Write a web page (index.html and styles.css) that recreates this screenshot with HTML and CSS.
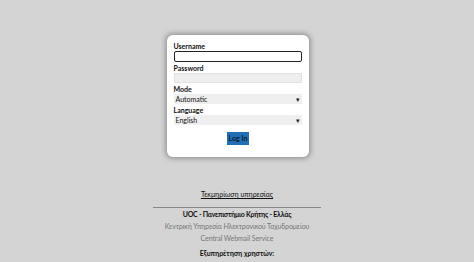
FILE: index.html
```html
<!DOCTYPE html>
<html>
<head>
<meta charset="utf-8">
<link rel="stylesheet" href="styles.css">
</head>
<body>
<div class="page">
  <form class="card">
    <label class="lbl">Username</label>
    <input class="inp inp-focus" type="text">
    <label class="lbl">Password</label>
    <input class="inp inp-pass" type="password">
    <label class="lbl">Mode</label>
    <div class="sel"><span>Automatic</span><span class="arrow">&#9662;</span></div>
    <label class="lbl lbl-tight">Language</label>
    <div class="sel"><span>English</span><span class="arrow">&#9662;</span></div>
    <div class="btnrow"><button class="btn" type="button">Log In</button></div>
  </form>
  <div class="footer">
    <a class="doc">Τεκμηρίωση υπηρεσίας</a>
    <div class="rule"></div>
    <div class="uoc">UOC - Πανεπιστήμιο Κρήτης - Ελλάς</div>
    <div class="gray">Κεντρική Υπηρεσία Ηλεκτρονικού Ταχυδρομείου</div>
    <div class="gray">Central Webmail Service</div>
    <div class="help">Εξυπηρέτηση χρηστών:</div>
  </div>
</div>
</body>
</html>
```
FILE: styles.css
```css
html, body { margin: 0; padding: 0; }
body {
  background: #d4d4d4;
  font-family: Lato, "Noto Sans", sans-serif;
  font-size: 7px;
  color: #111;
  width: 474px;
  height: 262px;
  overflow: hidden;
}
.page {
  display: flex;
  flex-direction: column;
  align-items: center;
  padding-top: 35px;
}
.card {
  width: 128px;
  padding: 5px 7px 12px 7px;
  background: #fff;
  border-radius: 6px;
  box-shadow: 0 0 5px 2px rgba(0,0,0,0.28);
  display: flex;
  flex-direction: column;
  margin-left: 1px;
}
.lbl {
  font-weight: bold;
  font-size: 7px;
  line-height: 10px;
  height: 10px;
  margin-top: 1px;
}
.lbl-tight { margin-top: 0; }
.inp {
  box-sizing: border-box;
  width: 128px;
  height: 10px;
  margin: 0;
  padding: 0;
  border: 1px solid #e2e2e2;
  background: #efefef;
  outline: none;
}
.inp-focus {
  height: 11px;
  margin-bottom: 0;
  background: #fff;
  border: 1.5px solid #222;
  border-radius: 2px;
}
.sel {
  box-sizing: border-box;
  width: 128px;
  height: 10px;
  background: #efefef;
  border-radius: 1px;
  display: flex;
  justify-content: space-between;
  align-items: center;
  padding: 0 2px 0 2px;
  font-size: 7px;
  line-height: 10px;
  margin-bottom: 1px;
}
.arrow { font-size: 7px; color: #222; }
.btnrow {
  display: flex;
  justify-content: center;
  margin-top: 6px;
}
.btn {
  font-family: Lato, "Noto Sans", sans-serif;
  font-size: 7px;
  font-weight: bold;
  color: #0a1a2a;
  background: #1f6fb8;
  border: none;
  padding: 0 2px;
  height: 13px;
  line-height: 13px;
  margin-left: 1px;
}
.footer {
  margin-top: 31px;
  display: flex;
  flex-direction: column;
  align-items: center;
  font-size: 7px;
  line-height: 12px;
}
.doc {
  text-decoration: underline;
  color: #111;
}
.rule {
  width: 168px;
  height: 1px;
  background: #888;
  margin: 7px 0 0 0;
}
.uoc { font-weight: bold; letter-spacing: -0.25px; }
.gray { color: #777; letter-spacing: -0.1px; }
.help { font-weight: bold; margin-top: 3px; }
```
